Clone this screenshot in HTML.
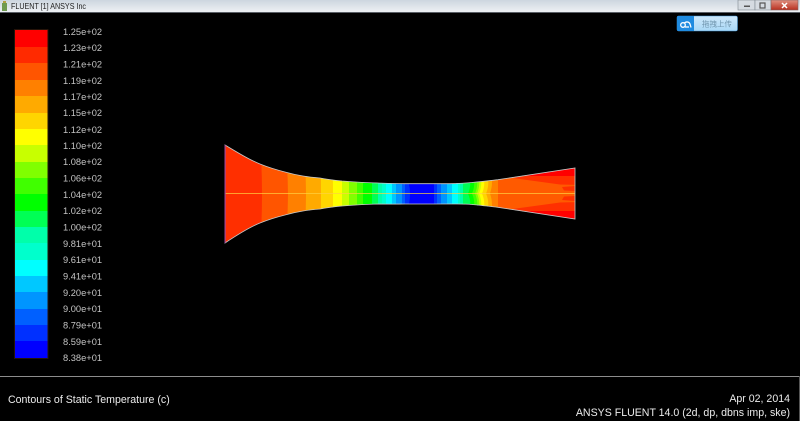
<!DOCTYPE html>
<html>
<head>
<meta charset="utf-8">
<style>
html,body{margin:0;padding:0;background:#000;}
body{width:800px;height:421px;overflow:hidden;position:relative;}
svg{position:absolute;left:0;top:0;display:block;}
</style>
</head>
<body>
<svg width="800" height="421" viewBox="0 0 800 421" xmlns="http://www.w3.org/2000/svg" font-family="'Liberation Sans','Noto Sans CJK SC',sans-serif">
<defs>
<linearGradient id="tb" x1="0" y1="0" x2="0" y2="1"><stop offset="0" stop-color="#cdd6df"/><stop offset="1" stop-color="#eef1f4"/></linearGradient>
<linearGradient id="cl" x1="0" y1="0" x2="0" y2="1"><stop offset="0" stop-color="#e09080"/><stop offset="1" stop-color="#b83020"/></linearGradient>
<linearGradient id="up" x1="0" y1="0" x2="0" y2="1"><stop offset="0" stop-color="#cfe9fb"/><stop offset="1" stop-color="#a9d8f6"/></linearGradient>
<filter id="soft" x="-5%" y="-20%" width="110%" height="140%"><feGaussianBlur stdDeviation="0.35"/></filter>
<clipPath id="wall"><path id="wp" d="M225,145 C240,154 250,160 260,164 C270,168 277,170 285,172 C292,174 297,175 303,176 C309,177 314,177.500 320,178 C328,179.500 335,180.300 342,181 C355,182 366,182.700 378,183 C390,183.500 398,183.700 405,183.700 L450,183.700 C458,183.500 465,183.200 472,182.500 C480,181.700 489,180.800 498,179.700 L575,168 L575,219 L498,207.300 C489,206.200 480,205.300 472,204.500 C465,203.800 458,204 450,204 L405,204 C398,204 390,204.300 378,204 C366,204.300 355,205 342,206 C335,206.700 328,207.500 320,209 C314,209.500 309,210 303,211 C297,212 292,213 285,215 C277,217 270,219 260,223 C250,227 240,233 225,243 Z"/></clipPath>
</defs>

<!-- title bar -->
<rect x="0" y="0" width="800" height="12" fill="url(#tb)"/>
<rect x="0" y="12" width="800" height="1" fill="#5a5f66"/>
<rect x="2" y="3" width="5" height="8" fill="#6f9a50"/>
<rect x="3" y="1" width="3" height="2" fill="#b0a040"/>
<text x="11" y="9" font-size="8" fill="#222" textLength="75" lengthAdjust="spacingAndGlyphs">FLUENT [1] ANSYS Inc</text>
<rect x="738" y="0" width="17" height="10" fill="#d5dbe1" stroke="#7f8890" stroke-width=".6"/>
<rect x="755" y="0" width="16" height="10" fill="#d5dbe1" stroke="#7f8890" stroke-width=".6"/>
<rect x="771" y="0" width="27" height="10" fill="url(#cl)" stroke="#7f6060" stroke-width=".6"/>
<rect x="744" y="5.500" width="6" height="1.500" fill="#555"/>
<rect x="760" y="3" width="5" height="5" fill="none" stroke="#555" stroke-width="1.200"/>
<path d="M782,3 L787,8 M787,3 L782,8" stroke="#fff" stroke-width="1.500"/>

<!-- upload widget -->
<rect x="677" y="16" width="60.500" height="15" rx="1.500" fill="url(#up)" stroke="#3d8fd0" stroke-width=".5"/>
<path d="M677,17.500 Q677,16 678.500,16 L694,16 L694,31 L678.500,31 Q677,31 677,29.500 Z" fill="#1f8be0"/>
<circle cx="683" cy="25" r="2.300" fill="none" stroke="#fff" stroke-width="1.300"/>
<path d="M684.500,23 A3.300,3.300 0 0 1 690,24 L691,27.500 M685,27 L689,27" fill="none" stroke="#fff" stroke-width="1.300"/>
<text x="702" y="26.500" font-size="7.500" fill="#6f95ad" filter="url(#soft)">拖拽上传</text>

<!-- legend -->
<rect x="14.500" y="29.500" width="33.500" height="329" fill="none" stroke="#402010" stroke-width=".6"/>
<rect x="15" y="30" width="32.500" height="17" fill="#ff0000"/>
<rect x="15" y="47" width="32.500" height="16" fill="#ff2a00"/>
<rect x="15" y="63" width="32.500" height="17" fill="#ff5500"/>
<rect x="15" y="80" width="32.500" height="16" fill="#ff8000"/>
<rect x="15" y="96" width="32.500" height="17" fill="#ffaa00"/>
<rect x="15" y="113" width="32.500" height="16" fill="#ffd500"/>
<rect x="15" y="129" width="32.500" height="16" fill="#ffff00"/>
<rect x="15" y="145" width="32.500" height="17" fill="#c8ff00"/>
<rect x="15" y="162" width="32.500" height="16" fill="#80ff00"/>
<rect x="15" y="178" width="32.500" height="16" fill="#40ff00"/>
<rect x="15" y="194" width="32.500" height="17" fill="#00ff00"/>
<rect x="15" y="211" width="32.500" height="16" fill="#00ff55"/>
<rect x="15" y="227" width="32.500" height="16" fill="#00ffaa"/>
<rect x="15" y="243" width="32.500" height="17" fill="#00ffcc"/>
<rect x="15" y="260" width="32.500" height="16" fill="#00ffff"/>
<rect x="15" y="276" width="32.500" height="16" fill="#00c8ff"/>
<rect x="15" y="292" width="32.500" height="17" fill="#0095ff"/>
<rect x="15" y="309" width="32.500" height="16" fill="#0060ff"/>
<rect x="15" y="325" width="32.500" height="16" fill="#0030ff"/>
<rect x="15" y="341" width="32.500" height="17" fill="#0000ff"/>

<g font-size="9.300" fill="#c4c4c4" filter="url(#soft)">
<text x="63" y="35">1.25e+02</text>
<text x="63" y="51">1.23e+02</text>
<text x="63" y="67.500">1.21e+02</text>
<text x="63" y="84">1.19e+02</text>
<text x="63" y="100">1.17e+02</text>
<text x="63" y="116">1.15e+02</text>
<text x="63" y="133">1.12e+02</text>
<text x="63" y="149">1.10e+02</text>
<text x="63" y="165">1.08e+02</text>
<text x="63" y="181.500">1.06e+02</text>
<text x="63" y="198">1.04e+02</text>
<text x="63" y="214">1.02e+02</text>
<text x="63" y="230.500">1.00e+02</text>
<text x="63" y="247">9.81e+01</text>
<text x="63" y="263">9.61e+01</text>
<text x="63" y="279.500">9.41e+01</text>
<text x="63" y="296">9.20e+01</text>
<text x="63" y="312">9.00e+01</text>
<text x="63" y="328.500">8.79e+01</text>
<text x="63" y="345">8.59e+01</text>
<text x="63" y="361">8.38e+01</text>
</g>

<!-- contour field -->
<g clip-path="url(#wall)">
<rect x="225" y="140" width="355" height="110" fill="#ff2f00"/>
<path d="M260,140 Q264,193.500 260,250 L600,250 L600,140 Z" fill="#ff5500"/>
<path d="M284,140 Q292,193.500 284,250 L600,250 L600,140 Z" fill="#ff8000"/>
<path d="M303,140 Q309,193.500 303,250 L600,250 L600,140 Z" fill="#ffaa00"/>
<path d="M320,140 Q322,193.500 320,250 L600,250 L600,140 Z" fill="#ffd500"/>
<path d="M332,140 Q334,193.500 332,250 L600,250 L600,140 Z" fill="#ffff00"/>
<rect x="342" y="140" width="260" height="110" fill="#c8ff00"/>
<rect x="349" y="140" width="260" height="110" fill="#80ff00"/>
<rect x="357" y="140" width="260" height="110" fill="#40ff00"/>
<rect x="363" y="140" width="260" height="110" fill="#00ff00"/>
<rect x="372" y="140" width="260" height="110" fill="#00ff55"/>
<rect x="378" y="140" width="260" height="110" fill="#00ffaa"/>
<rect x="382" y="140" width="260" height="110" fill="#00ffcc"/>
<rect x="386" y="140" width="260" height="110" fill="#00ffff"/>
<rect x="392" y="140" width="260" height="110" fill="#00c8ff"/>
<rect x="396" y="140" width="260" height="110" fill="#0095ff"/>
<rect x="402" y="140" width="260" height="110" fill="#0060ff"/>
<rect x="405" y="140" width="260" height="110" fill="#0030ff"/>
<path d="M409,140 L409,184 Q411,193.500 409,204 L409,250 L650,250 L650,140 Z" fill="#0000ff"/>
<rect x="434" y="140" width="200" height="110" fill="#0030ff"/>
<rect x="437" y="140" width="200" height="110" fill="#0060ff"/>
<rect x="441" y="140" width="200" height="110" fill="#0095ff"/>
<rect x="447" y="140" width="200" height="110" fill="#00c8ff"/>
<rect x="452" y="140" width="200" height="110" fill="#00ffff"/>
<rect x="458" y="140" width="200" height="110" fill="#00ffcc"/>
<rect x="460" y="140" width="200" height="110" fill="#00ffaa"/>
<rect x="463" y="140" width="200" height="110" fill="#00ff55"/>
<path d="M467,170 Q473,182 468,193.500 Q473,205 467,217 L650,217 L650,170 Z" fill="#00ff00"/>
<path d="M471,170 Q477,182 472,193.500 Q477,205 471,217 L650,217 L650,170 Z" fill="#40ff00"/>
<path d="M474,170 Q480,182 475,193.500 Q480,205 474,217 L650,217 L650,170 Z" fill="#80ff00"/>
<path d="M476,170 Q482,182 477,193.500 Q482,205 476,217 L650,217 L650,170 Z" fill="#c8ff00"/>
<path d="M478,170 Q484,182 479,193.500 Q484,205 478,217 L650,217 L650,170 Z" fill="#ffff00"/>
<path d="M481,170 Q487,182 482,193.500 Q487,205 481,217 L650,217 L650,170 Z" fill="#ffd500"/>
<path d="M485,170 Q491,182 486,193.500 Q491,205 485,217 L650,217 L650,170 Z" fill="#ffaa00"/>
<path d="M490,170 Q494,182 490,193.500 Q494,205 490,217 L650,217 L650,170 Z" fill="#ff8000"/>
<rect x="498" y="160" width="80" height="70" fill="#ff5a00"/>
<!-- outlet wedges -->
<path d="M505,177 L580,160 L580,185 L560,184.500 Z" fill="#ff3000"/>
<path d="M505,210 L580,227 L580,202 L560,202.500 Z" fill="#ff3000"/>
<path d="M525,176 L575,176 L580,160 Z" fill="#ff0000"/>
<path d="M525,211 L575,211 L580,227 Z" fill="#ff0000"/>
<path d="M562,187 L575,186 L575,191 L564,190.500 Z" fill="#ff3000"/>
<path d="M562,200 L575,201 L575,196 L564,196.500 Z" fill="#ff3000"/>
<rect x="225" y="193" width="350" height="1" fill="#ffd040" opacity=".7"/>
</g>
<use href="#wp" fill="none" stroke="#c8c8c8" stroke-width=".8"/>
<rect x="224.500" y="145" width="1.200" height="98" fill="#a04898"/>

<!-- footer -->
<rect x="0" y="376" width="800" height="1" fill="#8c8c8c"/>
<rect x="799" y="376" width="1" height="45" fill="#555"/>
<g filter="url(#soft)" font-size="10.600" fill="#ececec">
<text x="8" y="403">Contours of Static Temperature (c)</text>
<text x="790" y="402" text-anchor="end">Apr 02, 2014</text>
<text x="790" y="416" text-anchor="end">ANSYS FLUENT 14.0 (2d, dp, dbns imp, ske)</text>
</g>
</svg>
</body>
</html>
